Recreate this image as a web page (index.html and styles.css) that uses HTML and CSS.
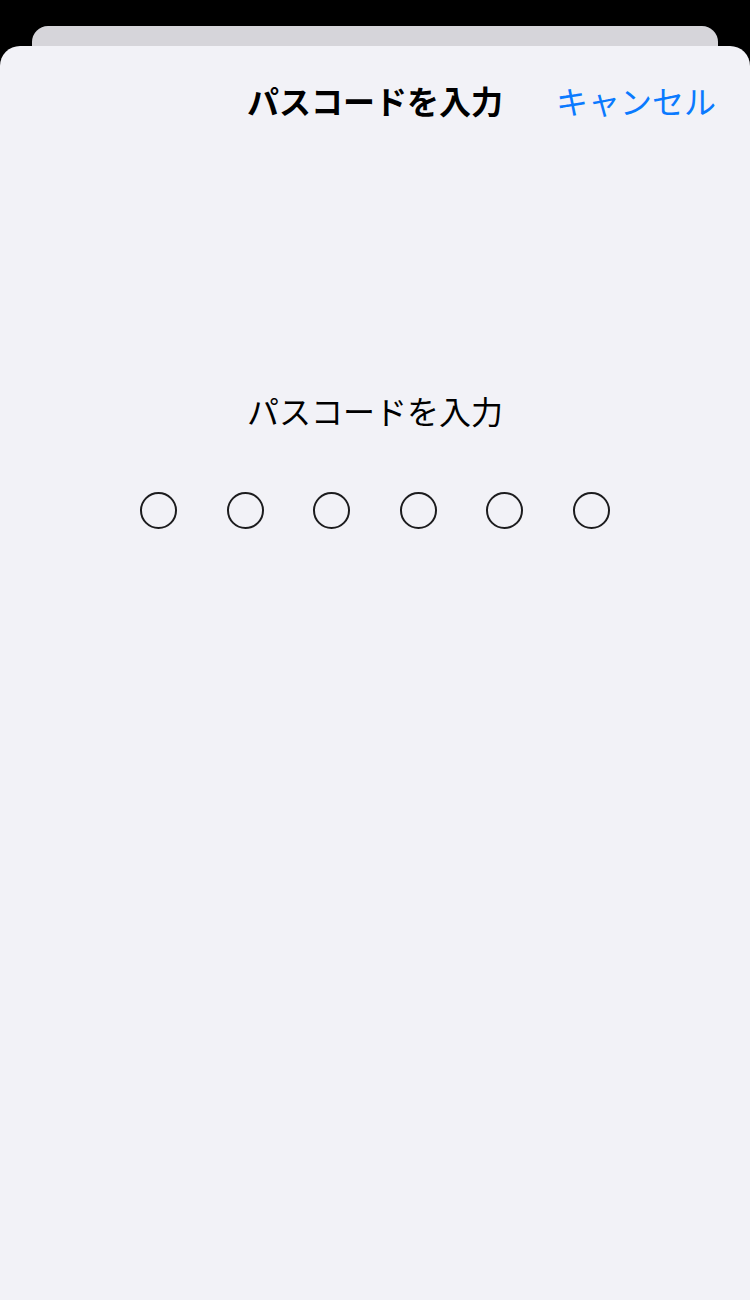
FILE: index.html
```html
<!DOCTYPE html>
<html lang="ja">
<head>
  <meta charset="UTF-8" />
  <meta name="viewport" content="width=device-width, initial-scale=1" />
  <title>パスコードを入力</title>
  <link rel="stylesheet" href="styles.css">
</head>
<body>
  <div class="back-card"></div>

  <div class="sheet">
    <header class="nav-bar">
      <span></span>
      <h1 class="nav-title">パスコードを入力</h1>
      <a href="#" class="nav-cancel">キャンセル</a>
    </header>

    <main class="passcode">
      <p class="passcode-label">パスコードを入力</p>
      <div class="dots" aria-label="パスコード 6 桁">
        <span class="dot"></span>
        <span class="dot"></span>
        <span class="dot"></span>
        <span class="dot"></span>
        <span class="dot"></span>
        <span class="dot"></span>
      </div>
    </main>
  </div>
</body>
</html>
```

FILE: styles.css
```css
:root {
  --black: #000;
  --back-card: #d6d5da;
  --sheet: #f2f2f7;
  --text: #000;
  --blue: #0a7aff;
  --dot: #1c1c1e;
  --font-family: "Noto Sans CJK JP", "Noto Sans", sans-serif;
}

* {
  box-sizing: border-box;
}

html,
body {
  height: 100%;
}

body {
  margin: 0;
  background: var(--black);
  font-family: var(--font-family);
  color: var(--text);
  display: flex;
  flex-direction: column;
  padding-top: 26px;
  overflow: hidden;
}

.back-card {
  height: 40px;
  margin: 0 32px -20px;
  background: var(--back-card);
  border-radius: 16px 16px 0 0;
}

.sheet {
  flex: 1;
  background: var(--sheet);
  border-radius: 20px 20px 0 0;
  position: relative;
}

.nav-bar {
  display: grid;
  grid-template-columns: 1fr auto 1fr;
  align-items: center;
  height: 108px;
  padding: 0 34px;
}

.nav-title {
  margin: 0;
  font-size: 32px;
  font-weight: 700;
  line-height: 1;
}

.nav-cancel {
  justify-self: end;
  color: var(--blue);
  text-decoration: none;
  font-size: 32px;
  line-height: 1;
}

.passcode {
  display: flex;
  flex-direction: column;
  align-items: center;
  padding-top: 240px;
}

.passcode-label {
  margin: 0;
  font-size: 32px;
  font-weight: 400;
  line-height: 1;
}

.dots {
  display: flex;
  gap: 49.6px;
  margin-top: 66px;
}

.dot {
  width: 37px;
  height: 37px;
  border: 2.8px solid var(--dot);
  border-radius: 50%;
}
```
